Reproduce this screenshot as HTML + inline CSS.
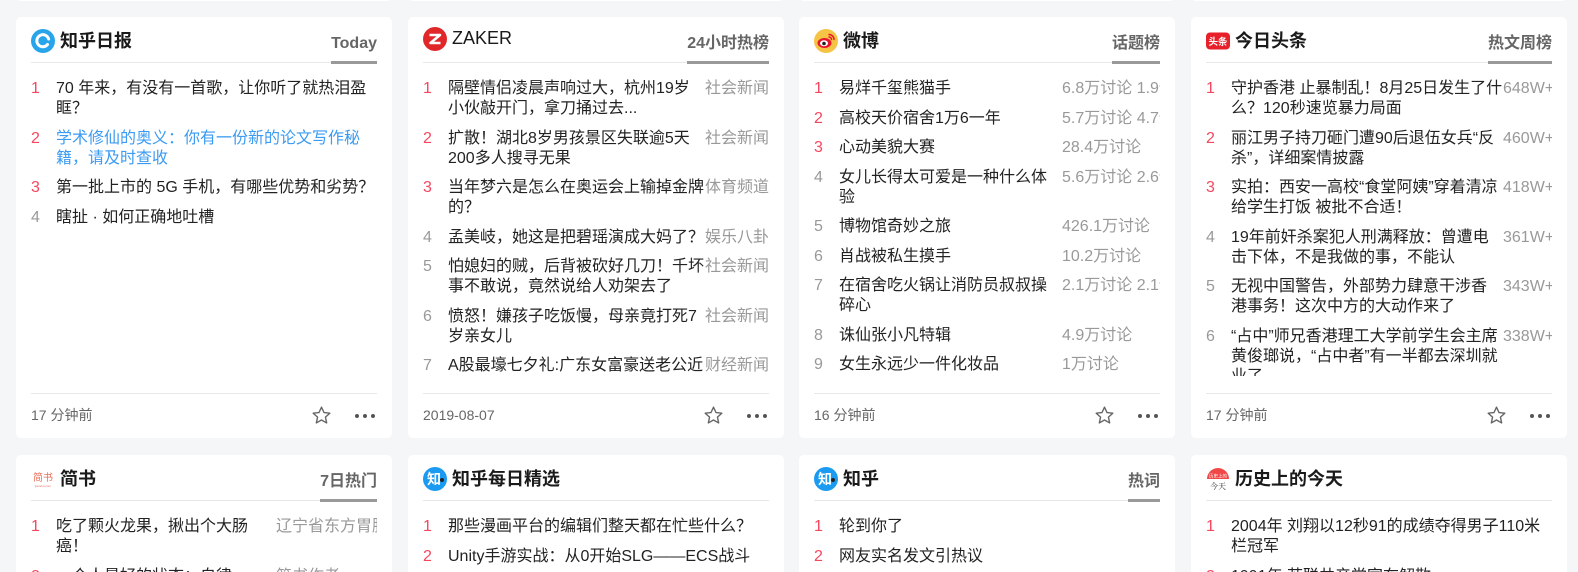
<!DOCTYPE html>
<html><head><meta charset="utf-8"><style>
*{margin:0;padding:0;box-sizing:border-box}
html,body{width:1578px;height:572px;overflow:hidden;background:#f5f6f8;font-family:"Liberation Sans","Noto Sans CJK SC",sans-serif;color:#222}
#wrap{position:relative;width:1578px;height:572px;overflow:hidden}
.card{position:absolute;width:376px;height:421px;background:#fff;border-radius:5px;overflow:hidden}
.r2{height:117px;border-radius:5px 5px 0 0}
.hd{position:absolute;left:15px;right:15px;top:0;height:46px;border-bottom:1px solid #e8e8e8}
.ic{position:absolute;left:0;top:12px;width:24px;height:24px}
.t{position:absolute;left:29px;top:11px;font-size:18px;font-weight:bold;line-height:26px;color:#1a1a1a}
.tab{position:absolute;right:0;bottom:-2px;font-size:16px;font-weight:bold;color:#666;line-height:20px;padding-bottom:7px;border-bottom:3px solid #999}
.list{position:absolute;left:15px;right:15px;top:62px;height:297px;overflow:hidden}
.r2 .list{height:55px}
.it{display:flex;font-size:16px;line-height:20px;margin-bottom:9.5px;color:#222}
.n{width:25px;flex:none;color:#f5475e}
.g .n{color:#999}
.tx{flex:none}
.m{flex:1;color:#999;white-space:nowrap;overflow:hidden;text-align:right}
.ml{text-align:left;padding-left:7px}
.ft{position:absolute;left:15px;right:15px;top:376px;height:45px;border-top:1px solid #e8e8e8;font-size:14px;color:#666;line-height:43px}
.star{position:absolute;right:45px;top:11px}
.dots{position:absolute;right:2px;top:20px;width:20px;height:4px}
.dots i{position:absolute;top:0;width:4px;height:4px;border-radius:2px;background:#555}
</style></head><body><div id="wrap">

<div class="card" style="left:16px;top:-420px"></div>
<div class="card" style="left:408px;top:-420px"></div>
<div class="card" style="left:799px;top:-420px"></div>
<div class="card" style="left:1191px;top:-420px"></div>

<!-- card 1 -->
<div class="card" style="left:16px;top:17px">
 <div class="hd">
  <svg class="ic" viewBox="0 0 24 24"><circle cx="12" cy="12" r="12" fill="#27a4ea"/><path d="M16.5 15.5A6 6 0 1 1 17.6 10" fill="none" stroke="#fff" stroke-width="3" stroke-linecap="round"/></svg>
  <span class="t">知乎日报</span><span class="tab">Today</span>
 </div>
 <div class="list">
  <div class="it"><span class="n">1</span><span class="tx" style="width:312px">70 年来，有没有一首歌，让你听了就热泪盈眶？</span></div>
  <div class="it"><span class="n">2</span><span class="tx" style="width:312px;color:#3b9bf2">学术修仙的奥义：你有一份新的论文写作秘籍，请及时查收</span></div>
  <div class="it"><span class="n">3</span><span class="tx" style="width:320px">第一批上市的 5G 手机，有哪些优势和劣势？</span></div>
  <div class="it g"><span class="n">4</span><span class="tx" style="width:312px">瞎扯 · 如何正确地吐槽</span></div>
 </div>
 <div class="ft">17 分钟前
  <svg class="star" width="21" height="21" viewBox="0 0 24 24"><path d="M12 2.5l2.9 6.2 6.6.7-5 4.5 1.4 6.6L12 17.1l-5.9 3.4 1.4-6.6-5-4.5 6.6-.7z" fill="none" stroke="#666" stroke-width="1.6" stroke-linejoin="round"/></svg>
  <span class="dots"><i style="left:0"></i><i style="left:8px"></i><i style="left:16px"></i></span></div>
</div>

<!-- card 2 -->
<div class="card" style="left:408px;top:17px">
 <div class="hd">
  <svg class="ic" viewBox="0 0 24 24" style="top:10px"><circle cx="12" cy="12" r="12" fill="#e0282a"/><path d="M6.5 8h10.5L7.5 16H17.5" fill="none" stroke="#fff" stroke-width="2.6" stroke-linejoin="round"/></svg>
  <span class="t" style="font-weight:normal;top:8px">ZAKER</span><span class="tab">24小时热榜</span>
 </div>
 <div class="list">
  <div class="it"><span class="n">1</span><span class="tx" style="width:256px">隔壁情侣凌晨声响过大，杭州19岁小伙敲开门，拿刀捅过去...</span><span class="m">社会新闻</span></div>
  <div class="it"><span class="n">2</span><span class="tx" style="width:256px">扩散！湖北8岁男孩景区失联逾5天200多人搜寻无果</span><span class="m">社会新闻</span></div>
  <div class="it"><span class="n">3</span><span class="tx" style="width:256px">当年梦六是怎么在奥运会上输掉金牌的？</span><span class="m">体育频道</span></div>
  <div class="it g"><span class="n">4</span><span class="tx" style="width:256px">孟美岐，她这是把碧瑶演成大妈了？</span><span class="m">娱乐八卦</span></div>
  <div class="it g"><span class="n">5</span><span class="tx" style="width:256px">怕媳妇的贼，后背被砍好几刀！千坏事不敢说，竟然说给人劝架去了</span><span class="m">社会新闻</span></div>
  <div class="it g"><span class="n">6</span><span class="tx" style="width:256px">愤怒！嫌孩子吃饭慢，母亲竟打死7岁亲女儿</span><span class="m">社会新闻</span></div>
  <div class="it g"><span class="n">7</span><span class="tx" style="width:256px">A股最壕七夕礼:广东女富豪送老公近百亿</span><span class="m">财经新闻</span></div>
 </div>
 <div class="ft">2019-08-07
  <svg class="star" width="21" height="21" viewBox="0 0 24 24"><path d="M12 2.5l2.9 6.2 6.6.7-5 4.5 1.4 6.6L12 17.1l-5.9 3.4 1.4-6.6-5-4.5 6.6-.7z" fill="none" stroke="#666" stroke-width="1.6" stroke-linejoin="round"/></svg>
  <span class="dots"><i style="left:0"></i><i style="left:8px"></i><i style="left:16px"></i></span></div>
</div>

<!-- card 3 -->
<div class="card" style="left:799px;top:17px">
 <div class="hd">
  <svg class="ic" viewBox="0 0 24 24"><circle cx="12" cy="12" r="12" fill="#f6c445"/><ellipse cx="10.5" cy="14" rx="7" ry="5" fill="#e6162d"/><ellipse cx="10" cy="14.3" rx="4" ry="3" fill="#fff"/><circle cx="10" cy="14.5" r="1.8" fill="#222"/><path d="M15 5.5a5 5 0 0 1 5 5M15 8a2.5 2.5 0 0 1 2.5 2.5" fill="none" stroke="#e6162d" stroke-width="1.5" stroke-linecap="round"/></svg>
  <span class="t">微博</span><span class="tab">话题榜</span>
 </div>
 <div class="list">
  <div class="it"><span class="n">1</span><span class="tx" style="width:216px">易烊千玺熊猫手</span><span class="m ml">6.8万讨论 1.9亿阅读</span></div>
  <div class="it"><span class="n">2</span><span class="tx" style="width:216px">高校天价宿舍1万6一年</span><span class="m ml">5.7万讨论 4.7亿阅读</span></div>
  <div class="it"><span class="n">3</span><span class="tx" style="width:216px">心动美貌大赛</span><span class="m ml">28.4万讨论</span></div>
  <div class="it g"><span class="n">4</span><span class="tx" style="width:216px">女儿长得太可爱是一种什么体验</span><span class="m ml">5.6万讨论 2.6亿阅读</span></div>
  <div class="it g"><span class="n">5</span><span class="tx" style="width:216px">博物馆奇妙之旅</span><span class="m ml">426.1万讨论</span></div>
  <div class="it g"><span class="n">6</span><span class="tx" style="width:216px">肖战被私生摸手</span><span class="m ml">10.2万讨论</span></div>
  <div class="it g"><span class="n">7</span><span class="tx" style="width:216px">在宿舍吃火锅让消防员叔叔操碎心</span><span class="m ml">2.1万讨论 2.1亿阅读</span></div>
  <div class="it g"><span class="n">8</span><span class="tx" style="width:216px">诛仙张小凡特辑</span><span class="m ml">4.9万讨论</span></div>
  <div class="it g"><span class="n">9</span><span class="tx" style="width:216px">女生永远少一件化妆品</span><span class="m ml">1万讨论</span></div>
 </div>
 <div class="ft">16 分钟前
  <svg class="star" width="21" height="21" viewBox="0 0 24 24"><path d="M12 2.5l2.9 6.2 6.6.7-5 4.5 1.4 6.6L12 17.1l-5.9 3.4 1.4-6.6-5-4.5 6.6-.7z" fill="none" stroke="#666" stroke-width="1.6" stroke-linejoin="round"/></svg>
  <span class="dots"><i style="left:0"></i><i style="left:8px"></i><i style="left:16px"></i></span></div>
</div>

<!-- card 4 -->
<div class="card" style="left:1191px;top:17px">
 <div class="hd">
  <svg class="ic" viewBox="0 0 24 24"><rect x="0" y="3.5" width="24" height="17" rx="4" fill="#e8202a"/><text x="12" y="16" font-size="9.5" font-weight="bold" fill="#fff" text-anchor="middle" font-family="Noto Sans CJK SC,sans-serif">头条</text></svg>
  <span class="t">今日头条</span><span class="tab">热文周榜</span>
 </div>
 <div class="list">
  <div class="it"><span class="n">1</span><span class="tx" style="width:272px">守护香港 止暴制乱！8月25日发生了什么？120秒速览暴力局面</span><span class="m">648W+</span></div>
  <div class="it"><span class="n">2</span><span class="tx" style="width:272px">丽江男子持刀砸门遭90后退伍女兵“反杀”，详细案情披露</span><span class="m">460W+</span></div>
  <div class="it"><span class="n">3</span><span class="tx" style="width:272px">实拍：西安一高校“食堂阿姨”穿着清凉给学生打饭 被批不合适！</span><span class="m">418W+</span></div>
  <div class="it g"><span class="n">4</span><span class="tx" style="width:272px">19年前奸杀案犯人刑满释放：曾遭电击下体，不是我做的事，不能认</span><span class="m">361W+</span></div>
  <div class="it g"><span class="n">5</span><span class="tx" style="width:262px;margin-right:10px">无视中国警告，外部势力肆意干涉香港事务！这次中方的大动作来了</span><span class="m">343W+</span></div>
  <div class="it g"><span class="n">6</span><span class="tx" style="width:272px">“占中”师兄香港理工大学前学生会主席黄俊瑯说，“占中者”有一半都去深圳就业了</span><span class="m">338W+</span></div>
 </div>
 <div class="ft">17 分钟前
  <svg class="star" width="21" height="21" viewBox="0 0 24 24"><path d="M12 2.5l2.9 6.2 6.6.7-5 4.5 1.4 6.6L12 17.1l-5.9 3.4 1.4-6.6-5-4.5 6.6-.7z" fill="none" stroke="#666" stroke-width="1.6" stroke-linejoin="round"/></svg>
  <span class="dots"><i style="left:0"></i><i style="left:8px"></i><i style="left:16px"></i></span></div>
</div>

<!-- row 2 -->
<div class="card r2" style="left:16px;top:455px">
 <div class="hd">
  <svg class="ic" viewBox="0 0 24 24"><text x="12" y="14" font-size="10" fill="#ea6f5a" text-anchor="middle" font-family="Noto Sans CJK SC,sans-serif">简书</text><text x="12" y="20" font-size="3" fill="#ea6f5a" text-anchor="middle" font-family="Liberation Sans,sans-serif">jianshu.com</text></svg>
  <span class="t">简书</span><span class="tab">7日热门</span>
 </div>
 <div class="list">
  <div class="it"><span class="n">1</span><span class="tx" style="width:200px">吃了颗火龙果，揪出个大肠癌！</span><span class="m ml" style="padding-left:20px">辽宁省东方胃肠</span></div>
  <div class="it"><span class="n">2</span><span class="tx" style="width:200px">一个人最好的状态：自律</span><span class="m ml" style="padding-left:20px">简书作者</span></div>
 </div>
</div>

<div class="card r2" style="left:408px;top:455px">
 <div class="hd">
  <svg class="ic" viewBox="0 0 24 24"><circle cx="12" cy="12" r="12" fill="#1a9af0"/><text x="11" y="17" font-size="14" font-weight="bold" fill="#fff" text-anchor="middle" font-family="Noto Sans CJK SC,sans-serif">知</text><circle cx="19" cy="13" r="2" fill="#222"/></svg>
  <span class="t">知乎每日精选</span>
 </div>
 <div class="list">
  <div class="it"><span class="n">1</span><span class="tx" style="width:321px">那些漫画平台的编辑们整天都在忙些什么？</span></div>
  <div class="it"><span class="n">2</span><span class="tx" style="width:321px">Unity手游实战：从0开始SLG——ECS战斗</span></div>
 </div>
</div>

<div class="card r2" style="left:799px;top:455px">
 <div class="hd">
  <svg class="ic" viewBox="0 0 24 24"><circle cx="12" cy="12" r="12" fill="#1a9af0"/><text x="11" y="17" font-size="14" font-weight="bold" fill="#fff" text-anchor="middle" font-family="Noto Sans CJK SC,sans-serif">知</text><circle cx="19" cy="13" r="2" fill="#222"/></svg>
  <span class="t">知乎</span><span class="tab">热词</span>
 </div>
 <div class="list">
  <div class="it"><span class="n">1</span><span class="tx" style="width:321px">轮到你了</span></div>
  <div class="it"><span class="n">2</span><span class="tx" style="width:321px">网友实名发文引热议</span></div>
 </div>
</div>

<div class="card r2" style="left:1191px;top:455px">
 <div class="hd">
  <svg class="ic" viewBox="0 0 24 24"><path d="M1 12a11 11 0 0 1 22 0z" fill="#f04848"/><text x="12" y="10.5" font-size="4.5" fill="#fff" text-anchor="middle" font-family="Noto Sans CJK SC,sans-serif">历史上的</text><text x="12" y="22" font-size="8" fill="#333" text-anchor="middle" font-family="Noto Serif CJK SC,serif">今天</text></svg>
  <span class="t">历史上的今天</span>
 </div>
 <div class="list">
  <div class="it"><span class="n">1</span><span class="tx" style="width:316px">2004年 刘翔以12秒91的成绩夺得男子110米栏冠军</span></div>
  <div class="it"><span class="n">2</span><span class="tx" style="width:316px">1991年 苏联共产党宣布解散</span></div>
 </div>
</div>

</div></body></html>
